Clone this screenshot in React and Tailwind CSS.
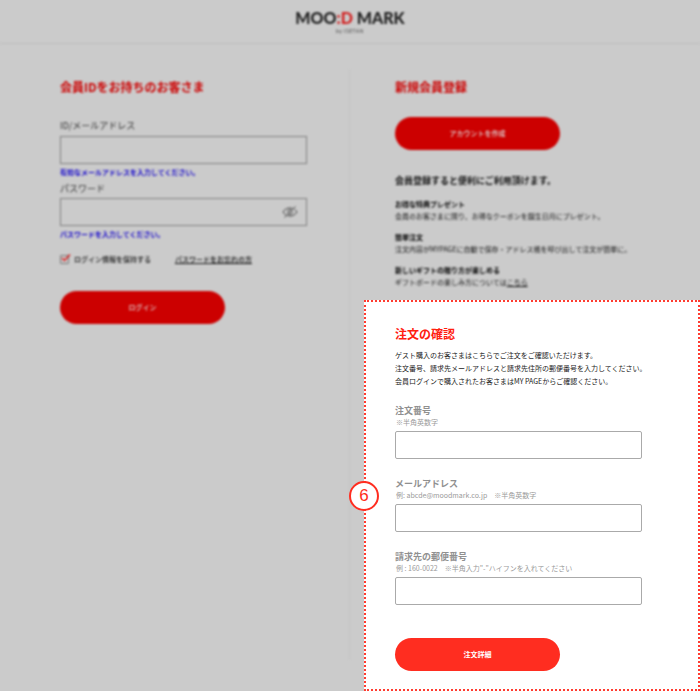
import React from 'react';

const benefits = [
    { title: 'お得な特典プレゼント', body: '会員のお客さまに限り、お得なクーポンを誕生日月にプレゼント。' },
    { title: '簡単注文', body: '注文内容がMYPAGEに自動で保存・アドレス帳を呼び出して注文が簡単に。' },
    { title: '新しいギフトの贈り方が楽しめる', body: 'ギフトボードの楽しみ方については', link: 'こちら' },
];

const orderFields = [
    { id: 'order-number', label: '注文番号', hint: '※半角英数字' },
    { id: 'order-email', label: 'メールアドレス', hint: '例: abcde@moodmark.co.jp　※半角英数字' },
    { id: 'order-zip', label: '請求先の郵便番号', hint: '例 : 160-0022　※半角入力"-"ハイフンを入れてください' },
];

const EyeSlash = () => (
    <svg width="16" height="12" viewBox="0 0 16 12" fill="none" stroke="#444" strokeWidth="1">
        <path d="M10.500 2.300C9.700 2.100 8.900 2 8 2 5 2 2.800 3.300 1 6c.8 1.300 1.800 2.300 3 3" />
        <path d="M5.500 9.700C6.300 9.900 7.100 10 8 10c3 0 5.200-1.300 7-4-.7-1.100-1.500-2-2.500-2.700" />
        <path d="M9.500 4.300A2.300 2.300 0 0 0 5.800 6.700M6.800 7.900A2.300 2.300 0 0 0 10.300 5.500" />
        <path d="M2.500 11.500 13.500.5" />
    </svg>
);

const Header = () => (
    <header className="h-11 border-b border-[#bdbdbd] flex flex-col items-center pt-2 blur-[1px]">
        <a href="#top" className="flex flex-col items-center font-['Lato','Liberation_Sans',sans-serif] text-[#222]">
            <span className="text-[16px] leading-5 font-black">
                MOO<span className="text-[#d22020]">:D</span> MARK
            </span>
            <span className="text-[5px] leading-[6px] tracking-widest text-[#444]">by ISETAN</span>
        </a>
    </header>
);

const LoginSection = () => (
    <section className="border-r border-[#c4c4c4] pl-[60px] pr-10 mt-[26px] mb-8 pt-[7px] blur-[1px]">
        <h2 className="text-[12px] leading-5 font-bold text-[#cc0000]">会員IDをお持ちのお客さま</h2>
        <form className="mt-[22px]">
            <label htmlFor="login-id" className="block text-[9px] leading-[14px] text-[#333]">ID/メールアドレス</label>
            <input id="login-id" type="email" className="block mt-[3px] w-full max-w-[247px] h-7 px-2 text-[9px] border border-[#808080]" />
            <p className="mt-1 text-[7px] leading-[9px] font-bold text-[#1000cc]">有効なメールアドレスを入力してください。</p>

            <label htmlFor="login-pw" className="block mt-[5px] text-[9px] leading-[14px] text-[#333]">パスワード</label>
            <div className="mt-[2px] flex items-center w-full max-w-[247px] h-7 pr-2 border border-[#808080]">
                <input id="login-pw" type="password" className="flex-1 min-w-0 h-full px-2 text-[9px]" />
                <button type="button" aria-label="パスワードを表示"><EyeSlash /></button>
            </div>
            <p className="mt-1 text-[7px] leading-[9px] font-bold text-[#1000cc]">パスワードを入力してください。</p>

            <div className="mt-[15px] flex items-center text-[7px] leading-[10px] font-medium text-[#111]">
                <label className="relative flex items-center gap-[5px]">
                    <input type="checkbox" defaultChecked className="appearance-none size-[9px] border border-[#777] rounded-[1px]" />
                    <svg className="absolute left-px top-0 pointer-events-none" width="10" height="8" viewBox="0 0 10 8" fill="none" stroke="#d81e1e" strokeWidth="1.500">
                        <path d="M1 4 3.500 6.500 9 .5" />
                    </svg>
                    ログイン情報を保持する
                </label>
                <a href="#forgot" className="ml-6 underline">パスワードをお忘れの方</a>
            </div>

            <button type="button" className="block mt-[27px] w-[165px] h-[33px] rounded-full bg-[#cc0000] text-[7px] font-medium text-[#ddd]">
                ログイン
            </button>
        </form>
    </section>
);

const RegisterSection = () => (
    <section className="pl-[45px] pt-[33px] blur-[1px]">
        <h2 className="text-[12px] leading-5 font-bold text-[#cc0000]">新規会員登録</h2>
        <button type="button" className="block mt-5 w-[165px] h-[33px] rounded-full bg-[#cc0000] text-[7px] font-medium text-[#ddd]">
            アカウントを作成
        </button>
        <p className="mt-6 text-[9px] leading-[14px] font-bold text-[#111]">会員登録すると便利にご利用頂けます。</p>
        <div className="mt-[10px] flex flex-col gap-[9px] text-[7px] leading-3">
            {benefits.map(item => (
                <div key={item.title}>
                    <h3 className="font-bold text-black">{item.title}</h3>
                    <p className="text-[#111]">
                        {item.body}
                        {item.link && <a href="#giftboard" className="underline">{item.link}</a>}
                    </p>
                </div>
            ))}
        </div>
    </section>
);

const OrderCheck = () => (
    <section className="relative mt-3 ml-[14px] border-2 border-dotted border-[#ff3b30] bg-white pl-[29px] pr-7 pt-[22px] pb-[18px]">
        <span className="absolute top-1/2 -left-[17px] -translate-y-1/2 size-[30px] rounded-full border-2 border-[#ff2d20] bg-white flex items-center justify-center font-['Liberation_Sans',sans-serif] text-[17px] text-[#ff2d20]">
            6
        </span>
        <h2 className="text-[12px] leading-5 font-bold text-[#ff2010]">注文の確認</h2>
        <p className="mt-[5px] text-[7px] leading-[13px] text-[#222]">
            ゲスト購入のお客さまはこちらでご注文をご確認いただけます。<br />
            注文番号、請求先メールアドレスと請求先住所の郵便番号を入力してください。<br />
            会員ログインで購入されたお客さまはMY PAGEからご確認ください。
        </p>
        <form className="mt-4">
            <div className="flex flex-col gap-[18px]">
                {orderFields.map(field => (
                    <div key={field.id}>
                        <label htmlFor={field.id} className="block text-[9px] leading-[14px] font-bold text-[#909090]">
                            {field.label}
                            <span className="block pl-px text-[7px] leading-[9px] font-normal text-[#999]">{field.hint}</span>
                        </label>
                        <input id={field.id} type="text" className="block mt-1 w-full max-w-[247px] h-7 px-2 text-[9px] border border-[#aaa] rounded-[2px]" />
                    </div>
                ))}
            </div>
            <button type="button" className="block mt-[33px] w-[165px] h-[33px] rounded-full bg-[#ff2d20] text-[7px] font-bold text-white">
                注文詳細
            </button>
        </form>
    </section>
);

const App = () => (
    <div lang="ja" className="min-h-screen bg-[#cbcbcb] overflow-hidden font-['Noto_Sans_CJK_JP',sans-serif]">
        <Header />
        <main className="grid grid-cols-2">
            <LoginSection />
            <div>
                <RegisterSection />
                <OrderCheck />
            </div>
        </main>
    </div>
);

export default App;
